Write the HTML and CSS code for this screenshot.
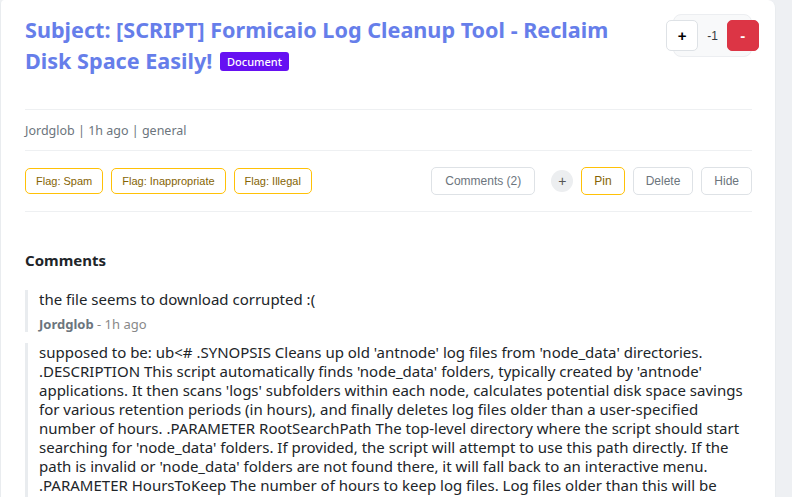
FILE: index.html
```html
<!DOCTYPE html>
<html lang="en">
<head>
<meta charset="utf-8">
<title>Post</title>
<link rel="stylesheet" href="styles.css">
</head>
<body>
<div class="card">
  <div class="post-header">
    <h1 class="title">Subject: [SCRIPT] Formicaio Log Cleanup Tool - Reclaim Disk Space Easily! <span class="badge">Document</span></h1>
    <div class="votes">
      <div class="votes-inner">
        <button class="vote up">+</button>
        <span class="score">-1</span>
        <button class="vote down">-</button>
      </div>
    </div>
  </div>
  <div class="meta">Jordglob | 1h ago | general</div>
  <div class="actions">
    <div class="flags">
      <button class="btn btn-warn">Flag: Spam</button>
      <button class="btn btn-warn">Flag: Inappropriate</button>
      <button class="btn btn-warn">Flag: Illegal</button>
    </div>
    <div class="controls">
      <button class="btn btn-plain btn-lg">Comments (2)</button>
      <button class="circle">+</button>
      <button class="btn btn-warn btn-md">Pin</button>
      <button class="btn btn-plain btn-md">Delete</button>
      <button class="btn btn-plain btn-md">Hide</button>
    </div>
  </div>
  <div class="comments">
    <h2 class="comments-title">Comments</h2>
    <div class="comment">
      <div class="comment-text">the file seems to download corrupted :(</div>
      <div class="comment-meta"><strong>Jordglob</strong> - 1h ago</div>
    </div>
    <div class="comment">
      <div class="comment-text">supposed to be: ub&lt;# .SYNOPSIS Cleans up old 'antnode' log files from 'node_data' directories. .DESCRIPTION This script automatically finds 'node_data' folders, typically created by 'antnode' applications. It then scans 'logs' subfolders within each node, calculates potential disk space savings for various retention periods (in hours), and finally deletes log files older than a user-specified number of hours. .PARAMETER RootSearchPath The top-level directory where the script should start searching for 'node_data' folders. If provided, the script will attempt to use this path directly. If the path is invalid or 'node_data' folders are not found there, it will fall back to an interactive menu. .PARAMETER HoursToKeep The number of hours to keep log files. Log files older than this will be deleted. If not provided, the script will prompt the user after showing potential savings.</div>
      <div class="comment-meta"><strong>Jordglob</strong> - 1h ago</div>
    </div>
  </div>
</div>
</body>
</html>
```
FILE: styles.css
```css
html, body {
  margin: 0;
  padding: 0;
}
body {
  background: #eef0f3;
  font-family: "Noto Sans", "Open Sans", sans-serif;
  color: #212529;
  overflow: hidden;
  height: 497px;
}
.card {
  width: 776px;
  box-sizing: border-box;
  background: #fff;
  border: 1px solid #e9ecef;
  border-top: none;
  border-radius: 4px 8px 8px 8px;
  padding: 0 23px 20px 24px;
  min-height: 497px;
}
.post-header {
  display: flex;
  align-items: flex-start;
  gap: 20px;
  padding: 14px 0 33px;
  border-bottom: 1px solid #eef0f2;
}
.title {
  flex: 1;
  margin: 0;
  font-size: 21.6px;
  line-height: 31px;
  font-weight: 700;
  color: #667eea;
}
.badge {
  display: inline-block;
  vertical-align: 3px;
  background: #6610f2;
  color: #fff;
  font-size: 11px;
  line-height: 19px;
  font-weight: 500;
  padding: 0 7px;
  border-radius: 3px;
  margin-left: 2px;
}
.votes {
  width: 79px;
  height: 43px;
  box-sizing: border-box;
  background: #f8f9fa;
  border: 1px solid #eceef1;
  border-radius: 8px;
  display: flex;
  justify-content: center;
  align-items: center;
}
.votes-inner {
  display: flex;
  align-items: center;
  gap: 9px;
  flex-shrink: 0;
}
.vote {
  width: 32px;
  height: 31px;
  border-radius: 5px;
  font-family: "Liberation Sans", Arial, sans-serif;
  font-weight: 700;
  font-size: 15px;
  padding: 0;
  cursor: pointer;
}
.vote.up {
  background: #fff;
  border: 1px solid #dee2e6;
  color: #000;
}
.vote.down {
  background: #dc3545;
  border: 1px solid #dc3545;
  color: #fff;
}
.score {
  font-family: "Liberation Sans", Arial, sans-serif;
  font-size: 12px;
  color: #343a40;
}
.meta {
  font-size: 12.5px;
  line-height: 20px;
  color: #6c757d;
  padding: 11px 0 9px;
  border-bottom: 1px solid #eef0f2;
}
.actions {
  display: flex;
  justify-content: space-between;
  align-items: center;
  padding: 16px 0 16px;
  border-bottom: 1px solid #eef0f2;
}
.flags, .controls {
  display: flex;
  align-items: center;
  gap: 8px;
}
.btn {
  font-family: "Liberation Sans", Arial, sans-serif;
  background: #fff;
  height: 26px;
  padding: 0 10px;
  border-radius: 5px;
  font-size: 11px;
  cursor: pointer;
}
.btn-md {
  height: 28px;
  font-size: 12px;
  padding: 0 12px;
}
.btn-lg {
  height: 28px;
  font-size: 12px;
  padding: 0 13px;
  margin-right: 8px;
}
.btn-warn {
  border: 1px solid #ffc107;
  color: #856404;
}
.btn-plain {
  border: 1px solid #dee2e6;
  color: #6c757d;
}
.circle {
  width: 22px;
  height: 22px;
  border-radius: 50%;
  border: none;
  background: #eceef0;
  color: #555;
  font-family: "Liberation Sans", Arial, sans-serif;
  font-size: 14px;
  padding: 0;
  line-height: 22px;
}
.comments {
  padding-top: 37px;
}
.comments-title {
  margin: 0 0 19px;
  font-size: 15px;
  line-height: 22px;
  font-weight: 700;
  color: #212529;
}
.comment {
  border-left: 3px solid #e9ecef;
  padding-left: 11px;
  margin-bottom: 11px;
}
.comment-text {
  font-size: 15px;
  line-height: 19px;
  color: #212529;
}
.comment-meta {
  margin-top: 7px;
  font-size: 13px;
  line-height: 16px;
  color: #888;
}
.comment-meta strong {
  color: #6c757d;
}
```
